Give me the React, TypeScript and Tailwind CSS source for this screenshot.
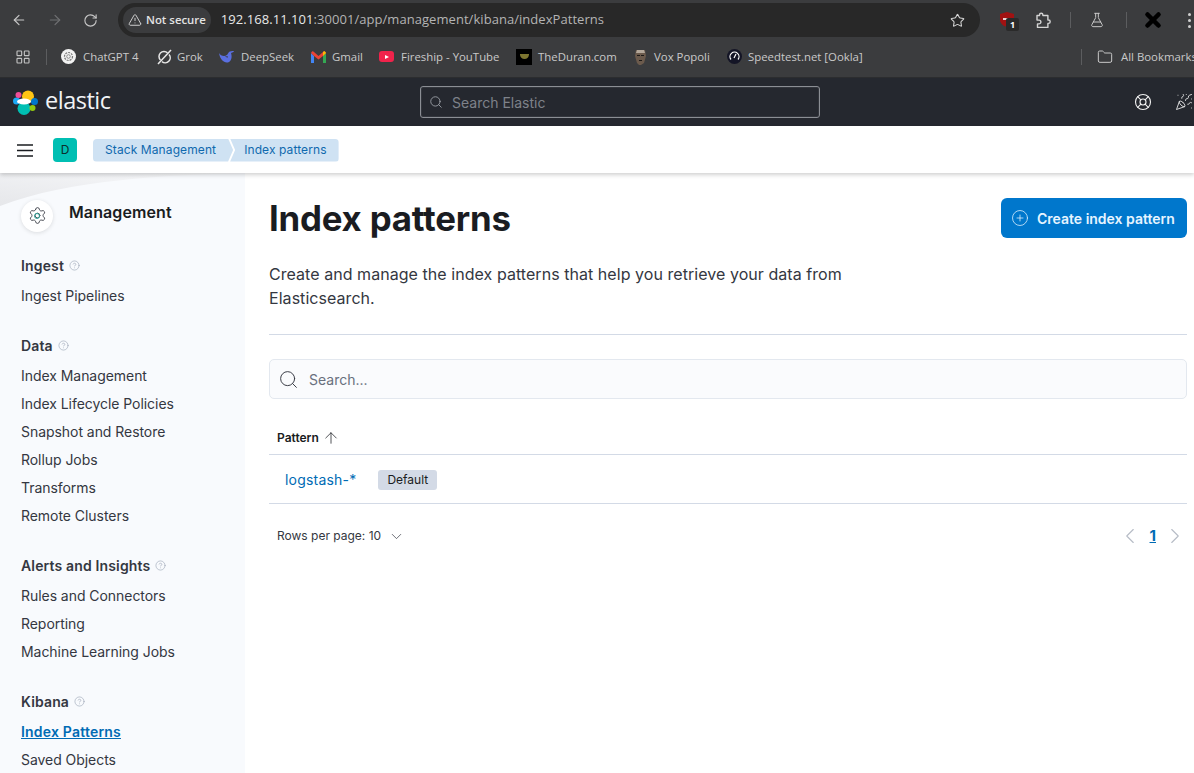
import { ArrowLeft, ArrowRight, RotateCw, TriangleAlert, Star, FlaskConical, X, Folder, LayoutGrid, Settings, Search, ArrowUp, ChevronDown, ChevronLeft, ChevronRight, LifeBuoy, PartyPopper, CirclePlus, CircleHelp } from "lucide-react";

const bookmarks = [
  {
    name: "ChatGPT 4",
    icon: (
      <svg width="15" height="15" viewBox="0 0 15 15" fill="none" className="shrink-0">
        <circle cx="7.500" cy="7.500" r="7.500" fill="#f2f2f2" />
        <circle cx="7.500" cy="7.500" r="4" stroke="#777" strokeWidth="1.200" strokeDasharray="2 1" />
        <circle cx="7.500" cy="7.500" r="1.800" stroke="#777" strokeWidth="0.800" />
      </svg>
    ),
    w: "w-[96px]",
    gap: "gap-[7px]",
  },
  {
    name: "Grok",
    icon: (
      <svg width="15" height="16" viewBox="0 0 15 16" fill="none" stroke="#e8e8e8" strokeWidth="1.500" className="shrink-0">
        <path d="M10.500 3.800A5 5 0 0 0 3.500 11M5 12.600A5 5 0 0 0 12 5.500" />
        <path d="M1 15 14 1" />
      </svg>
    ),
    w: "w-[62px]",
    gap: "gap-[5px]",
  },
  {
    name: "DeepSeek",
    icon: (
      <svg width="15" height="14" viewBox="0 0 15 14" fill="none" className="shrink-0">
        <path d="M0 3c1 7 6 11 10 9 3-2 3-6 2-9 2-1 3-1 3-2-2 0-4 0-5 1L8 5 5 6C3 6 1 5 0 3Z" fill="#5a6fe0" />
        <path d="M5 4c1 2 2 3 4 3" stroke="#3b3c3e" strokeWidth="1" />
      </svg>
    ),
    w: "w-[92px]",
    gap: "gap-[7px]",
  },
  {
    name: "Gmail",
    icon: (
      <svg width="15" height="12" viewBox="0 0 15 12" fill="none" className="shrink-0">
        <path d="M0 2v10h3V5L0 2Z" fill="#4285f4" />
        <path d="M15 2v10h-3V5l3-3Z" fill="#34a853" />
        <path d="M0 2c1-2 2-2 3-1l4.500 4L12 1c1-1 2-1 3 1l-3 3-4.500 3.500L3 5 0 2Z" fill="#ea4335" />
        <path d="M12 1c1-1 2-1 3 1l-3 3V1Z" fill="#fbbc04" />
      </svg>
    ),
    w: "w-[68px]",
    gap: "gap-[6px]",
  },
  {
    name: "Fireship - YouTube",
    icon: (
      <span className="w-[15px] h-[11px] shrink-0 rounded-[3px] bg-[#f0234b] flex items-center justify-center">
        <span className="w-0 h-0 border-y-[2.5px] border-y-transparent border-l-[4px] border-l-white" />
      </span>
    ),
    w: "w-[137px]",
    gap: "gap-[7px]",
  },
  {
    name: "TheDuran.com",
    icon: (
      <span className="w-[16px] h-[16px] shrink-0 bg-black flex items-center justify-center">
        <span className="w-[9px] h-[5px] bg-[#7d7530] rounded-b-full" />
      </span>
    ),
    w: "w-[117px]",
    gap: "gap-[6px]",
  },
  {
    name: "Vox Popoli",
    icon: (
      <svg width="13" height="16" viewBox="0 0 13 16" className="shrink-0 ml-[1px]">
        <path d="M2 1h9l1 6-2 7-3 2h-2l-2-2-2-7 1-6Z" fill="#6b5a4c" />
        <path d="M3 1h7l1 3H2l1-3Z" fill="#b3a79a" />
        <path d="M3 6h3v1H3zM7 6h3v1H7zM5 11h3v1H5z" fill="#1d1a18" />
      </svg>
    ),
    w: "w-[94px]",
    gap: "gap-[7px]",
  },
  {
    name: "Speedtest.net [Ookla]",
    icon: (
      <svg width="15" height="15" viewBox="0 0 15 15" fill="none" className="shrink-0">
        <circle cx="7.500" cy="7.500" r="7.500" fill="#141526" />
        <path d="M4 10.500a4.500 4.500 0 1 1 7 0M7 9l2-4" stroke="#fff" strokeWidth="1.200" />
      </svg>
    ),
    w: "",
    gap: "gap-[6px]",
  },
];

const sections = [
  { title: "Ingest", items: ["Ingest Pipelines"] },
  { title: "Data", items: ["Index Management", "Index Lifecycle Policies", "Snapshot and Restore", "Rollup Jobs", "Transforms", "Remote Clusters"] },
  { title: "Alerts and Insights", items: ["Rules and Connectors", "Reporting", "Machine Learning Jobs"] },
  { title: "Kibana", items: ["Index Patterns", "Saved Objects"] },
];

const ElasticLogo = () => (
  <svg width="25" height="25" viewBox="0 0 25 25">
    <circle cx="15" cy="6.500" r="6" fill="#fec514" />
    <circle cx="3.500" cy="11" r="3.500" fill="#1ba9f5" />
    <circle cx="5.500" cy="5" r="3" fill="#f04e98" />
    <circle cx="21.500" cy="11.500" r="3.500" fill="#0077cc" />
    <circle cx="11" cy="18.500" r="6.500" fill="#00bfb3" />
    <circle cx="19.500" cy="18" r="3" fill="#93c90e" />
    <ellipse cx="11" cy="11.500" rx="7" ry="3" fill="#ffffff" />
  </svg>
);

const ExtensionIcon = () => (
  <svg width="17" height="17" viewBox="0 0 17 17" fill="none" stroke="#d4d4d4" strokeWidth="1.400" strokeLinejoin="round" className="shrink-0">
    <path d="M2 3.500h2.500V3a1.700 1.700 0 0 1 3.400 0v.5h5V8h.6a1.700 1.700 0 0 1 0 3.400h-.6v4H2.500v-3.500H4a1.900 1.900 0 0 0 0-3.800H2V3.500Z" />
  </svg>
);

const App = () => (
  <div className="h-[773px] overflow-hidden flex flex-col bg-white font-['Inter',sans-serif]">
    {/* Browser toolbar */}
    <div className="h-[40px] shrink-0 bg-[#3b3c3e] flex items-center text-[#c7c7c7]">
      <div className="w-[118px] shrink-0 flex items-center pl-[11px]">
        <ArrowLeft size={16} strokeWidth={1.800} className="text-[#c7c7c7]" />
        <ArrowRight size={16} strokeWidth={1.800} className="ml-[20px] text-[#6f7072]" />
        <RotateCw size={15} strokeWidth={1.800} className="ml-[20px]" />
      </div>
      <div className="w-[862px] h-[34px] shrink-0 bg-[#282828] rounded-full flex items-center pl-[5px] pr-[15px]">
        <div className="h-[26px] px-[5px] rounded-full bg-[#3b3c3e] flex items-center gap-[4px] text-[#e3e3e3] text-[11.400px] font-['Open_Sans',sans-serif] font-semibold">
          <TriangleAlert size={14} strokeWidth={1.500} />
          Not secure
        </div>
        <div className="ml-[10px] flex-1 text-[13px] tracking-[0.05px] font-['Open_Sans',sans-serif] text-[#b4b4b4]">
          <span className="text-[#e8e8e8]">192.168.11.101</span>:30001/app/management/kibana/indexPatterns
        </div>
        <Star size={15} strokeWidth={1.700} className="text-[#d6d6d6]" />
      </div>
      <div className="flex-1 flex items-center pl-[20px]">
        <div className="relative w-[35px] h-[20px] shrink-0">
          <svg width="14" height="15" viewBox="0 0 14 15" className="absolute left-0 top-[2px]">
            <path d="M7 0 14 2v6c0 3-3 6-7 7-4-1-7-4-7-7V2l7-2Z" fill="#a11212" />
            <rect x="3" y="6" width="5" height="2" fill="#e9d0d0" />
          </svg>
          <span className="absolute left-[6px] top-[8px] w-[13px] h-[13px] rounded-[2px] bg-[#2a2a2a] text-white text-[9px] font-bold flex items-center justify-center font-['Open_Sans',sans-serif]">1</span>
        </div>
        <ExtensionIcon />
        <div className="w-px h-[16px] bg-[#5c5d5f] ml-[18px] shrink-0" />
        <FlaskConical size={16} strokeWidth={1.500} className="ml-[18px] text-[#c7c7c7] shrink-0" />
        <div className="w-px h-[16px] bg-[#5c5d5f] ml-[21px] shrink-0" />
        <X size={22} strokeWidth={5} className="ml-[15px] text-black shrink-0" />
        <div className="ml-[24px] flex flex-col gap-[3px] shrink-0">
          <span className="block w-[3px] h-[3px] rounded-full bg-[#d0d0d0]" />
          <span className="block w-[3px] h-[3px] rounded-full bg-[#d0d0d0]" />
          <span className="block w-[3px] h-[3px] rounded-full bg-[#d0d0d0]" />
        </div>
      </div>
    </div>

    {/* Bookmarks */}
    <div className="h-[38px] shrink-0 bg-[#3b3c3e] border-b border-[#2c2d2f] pb-[3px] flex items-center text-[11.400px] font-['Open_Sans',sans-serif] text-[#c9c9c9] whitespace-nowrap">
      <div className="flex items-center pl-[15px] pr-[14px]">
        <LayoutGrid size={16} strokeWidth={1.700} className="text-[#c2c2c2]" />
        <div className="w-px h-[16px] bg-[#5c5d5f] ml-[15px]" />
      </div>
      <div className="flex items-center w-[1020px] shrink-0">
        {bookmarks.map((b) => (
          <div key={b.name} className={`flex items-center shrink-0 ${b.gap} ${b.w}`}>
            {b.icon}
            <span>{b.name}</span>
          </div>
        ))}
      </div>
      <div className="w-px h-[16px] bg-[#5c5d5f] shrink-0" />
      <div className="flex items-center gap-[8px] ml-[15px]">
        <Folder size={16} strokeWidth={1.500} className="shrink-0" />
        <span>All Bookmarks</span>
      </div>
    </div>

    {/* Kibana header */}
    <div className="h-[48px] shrink-0 bg-[#25282f] flex items-center pl-[13px]">
      <ElasticLogo />
      <span className="ml-[7px] w-[65px] text-[#f2f4f7] text-[23.500px] font-['Open_Sans',sans-serif] tracking-[-0.5px] leading-none -mt-[3px]">elastic</span>
      <div className="ml-[310px] w-[400px] h-[32px] bg-[#25282f] border border-[#8b8e94] rounded-[3px] flex items-center pl-[8px] gap-[9px] shadow-[inset_0_0_0_1px_#33363d]">
        <Search size={14} strokeWidth={1.500} className="text-[#9fa3aa]" />
        <span className="text-[#7e828a] text-[14px]">Search Elastic</span>
      </div>
      <div className="ml-auto flex items-center gap-[23px] mr-[1px]">
        <LifeBuoy size={18} strokeWidth={1.500} className="text-[#f0f0f0]" />
        <PartyPopper size={18} strokeWidth={1.200} className="text-[#e8e8e8]" />
      </div>
    </div>

    {/* Breadcrumb bar */}
    <div className="h-[47px] shrink-0 bg-white flex items-center pt-[1px] pl-[17px] shadow-[0_2px_4px_rgba(0,0,0,0.18)] relative z-10">
      <svg width="16" height="13" viewBox="0 0 16 13" fill="none" stroke="#1a1c21" strokeWidth="1.600" className="shrink-0">
        <path d="M0 1h16M0 6.500h16M0 12h16" />
      </svg>
      <div className="ml-[20px] w-[24px] h-[24px] rounded-[4px] bg-[#00bfb3] flex items-center justify-center text-[12px] text-[#0b2e2c]">D</div>
      <div className="ml-[16px] flex items-center h-[23px] text-[12px] text-[#0f69ae] tracking-[0.1px]">
        <div className="h-full pl-[12px] pr-[17px] bg-[#cfe2f3] rounded-l-[4px] flex items-center [clip-path:polygon(0_0,calc(100%-5px)_0,100%_50%,calc(100%-5px)_100%,0_100%)]">Stack Management</div>
        <div className="h-full pl-[14px] pr-[12px] -ml-[3px] bg-[#cfe2f3] rounded-r-[4px] flex items-center [clip-path:polygon(0_0,100%_0,100%_100%,0_100%,5px_50%)]">Index patterns</div>
      </div>
    </div>

    {/* Body */}
    <div className="flex-1 flex min-h-0">
      <aside className="w-[245px] shrink-0 bg-[#f8fafd] pl-[21px] pt-[25px] relative">
        <svg width="245" height="40" viewBox="0 0 245 40" className="absolute left-0 top-0" preserveAspectRatio="none">
          <defs>
            <linearGradient id="wave" x1="0" y1="1" x2="1" y2="0">
              <stop offset="0" stopColor="#e6e7ea" />
              <stop offset="1" stopColor="#f8f9fb" />
            </linearGradient>
          </defs>
          <path d="M0 0h245C170 2 70 6 0 33Z" fill="url(#wave)" />
        </svg>
        <div className="flex items-center h-[30px] relative">
          <div className="relative w-[32px] h-[32px] mt-[5px] rounded-full bg-white shadow-[0_1px_4px_rgba(0,0,0,0.12)] flex items-center justify-center">
            <Settings size={19} strokeWidth={1.100} className="text-[#343741]" />
            <span className="absolute left-[13px] top-[13px] w-[6px] h-[6px] rounded-full border border-[#2fa79c]" />
          </div>
          <span className="ml-[16px] -mt-[3px] text-[16px] font-semibold text-[#1a1c21] tracking-[0.1px]">Management</span>
        </div>
        <div className="mt-[25px] flex flex-col gap-[26px] relative">
          {sections.map((s) => (
            <div key={s.title}>
              <div className="flex items-center gap-[5px] h-[24px] text-[14px] font-semibold text-[#343741] tracking-[0.15px]">
                {s.title}
                <CircleHelp size={11} strokeWidth={1.300} className="text-[#98a2b3]" />
              </div>
              <div className="mt-[6px] flex flex-col gap-[4px]">
                {s.items.map((item) =>
                  item === "Index Patterns" ? (
                    <div key={item} className="h-[24px] flex items-center text-[14px] font-semibold tracking-[0.2px] text-[#006bb4] underline">{item}</div>
                  ) : (
                    <div key={item} className="h-[24px] flex items-center text-[14px] tracking-[-0.05px] text-[#343741]">{item}</div>
                  ),
                )}
              </div>
            </div>
          ))}
        </div>
      </aside>

      <main className="flex-1 min-w-0 pl-[24px] pr-[7px] pt-[25px] border-l border-[#eceef1] -ml-px">
        <div className="flex items-start justify-between">
          <h1 className="text-[34.800px] leading-[40px] font-bold text-[#1a1c21] tracking-[-0.2px]">Index patterns</h1>
          <button className="w-[186px] h-[40px] bg-[#0077cc] rounded-[6px] flex items-center pl-[10px] gap-[8px] text-[14px] font-semibold text-[#e6f4ff]">
            <CirclePlus size={18} strokeWidth={1} />
            Create index pattern
          </button>
        </div>
        <p className="mt-[24px] w-[600px] text-[16px] leading-[24px] tracking-[0.05px] text-[#343741]">Create and manage the index patterns that help you retrieve your data from Elasticsearch.</p>
        <div className="mt-[24px] h-px bg-[#d3dae6]" />
        <div className="mt-[24px] h-[40px] rounded-[5px] bg-[#fafbfd] border border-[#e3e8ef] flex items-center pl-[8px] gap-[10px] text-[14px] text-[#69707d]">
          <Search size={21} strokeWidth={1.100} className="text-[#343741]" />
          Search...
        </div>
        <div className="mt-[23px] h-[33px] flex items-center pl-[8px] gap-[3px] border-b border-[#d3dae6] text-[12px] font-semibold text-[#1a1c21]">
          Pattern
          <ArrowUp size={18} strokeWidth={1} />
        </div>
        <div className="h-[49px] flex items-center pl-[16px] border-b border-[#d3dae6]">
          <span className="text-[14px] tracking-[0.2px] text-[#006bb4]">logstash-*</span>
          <span className="ml-[22px] mt-[2px] h-[20px] px-[9px] rounded-[3px] bg-[#d3dae6] flex items-center text-[12px] text-[#1a1c21]">Default</span>
        </div>
        <div className="mt-[20px] flex items-center justify-between pl-[8px] h-[24px] text-[12px] text-[#343741]">
          <div className="flex items-center gap-[7px]">
            Rows per page: 10
            <ChevronDown size={17} strokeWidth={1} />
          </div>
          <div className="flex items-center text-[#b6bcc6]">
            <ChevronLeft size={26} strokeWidth={1} />
            <span className="ml-[7px] text-[15px] font-bold text-[#006bb4] underline">1</span>
            <ChevronRight size={26} strokeWidth={1} className="ml-[6px] -mr-px" />
          </div>
        </div>
      </main>
    </div>
  </div>
);

export default App;
